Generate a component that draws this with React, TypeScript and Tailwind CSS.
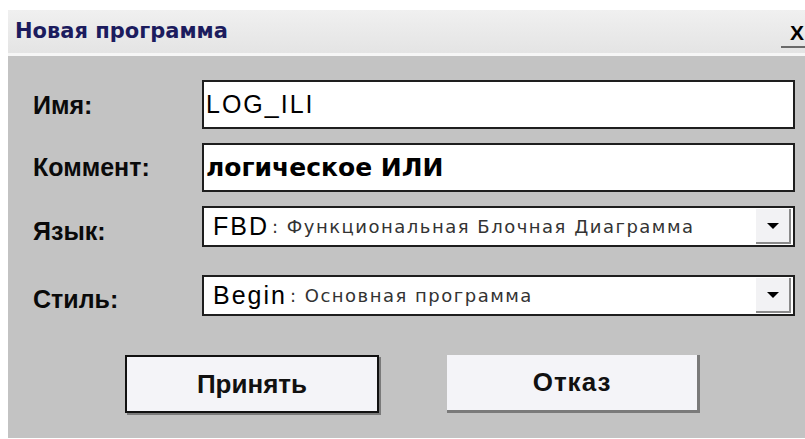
import React from "react";

const ui = { fontFamily: '"DejaVu Sans", "Noto Sans", sans-serif' };
const arial = { fontFamily: '"Liberation Sans", Arial, sans-serif' };

function TextField({ children, bold }: { children: React.ReactNode; bold?: boolean }) {
  return (
    <div className="flex h-[49px] flex-1 items-center border-2 border-[#1e1e1e] bg-white pl-[2px]">
      {bold ? (
        <span className="text-[25px] font-bold leading-none text-black">{children}</span>
      ) : (
        <span className="text-[25px] leading-none tracking-[2px] text-black" style={arial}>
          {children}
        </span>
      )}
    </div>
  );
}

function SelectField({ code, label }: { code: string; label: string }) {
  return (
    <div className="flex h-[41px] flex-1 items-stretch border-2 border-[#1e1e1e] bg-white">
      <div className="flex flex-1 items-center pl-[9px]">
        <span className="text-[25px] leading-none tracking-[2px] text-black" style={arial}>
          {code}
        </span>
        <span className="ml-[3px] text-[18px] leading-none tracking-[1.5px] text-[#333]">
          : {label}
        </span>
      </div>
      <div className="my-[1px] mr-[2px] flex w-[35px] items-center justify-center border-r-2 border-b-2 border-[#8a8a8a] bg-[#f2f2f4]">
        <svg width="12" height="6" viewBox="0 0 12 6">
          <path d="M0 0 H12 L6 6 Z" fill="#000" />
        </svg>
      </div>
    </div>
  );
}

function Label({ children, shift = 0 }: { children: React.ReactNode; shift?: number }) {
  return (
    <div className="w-[169px] shrink-0 text-[25px] font-bold leading-none text-[#0a0a0a]" style={{ ...arial, marginTop: shift }}>
      {children}
    </div>
  );
}

export default function App() {
  return (
    <div className="h-[439px] w-[805px] overflow-hidden bg-white pl-[8px] pt-[10px]" style={ui}>
      <div className="flex h-[428px] flex-col">
        {/* caption */}
        <div className="flex h-[43px] items-center justify-between bg-gradient-to-b from-[#f0f0f0] to-[#e4e4e4] pl-[7px]">
          <span className="text-[21px] font-bold text-[#1c1c5e]">Новая программа</span>
          <div className="flex h-full flex-col items-end justify-center pt-[6px]">
            <span className="mr-[1px] text-[21px] font-bold leading-none text-black" style={arial}>
              X
            </span>
            <div className="mt-[3px] h-[2px] w-[24px] bg-[#6a6a6a]" />
          </div>
        </div>
        <div className="h-[3px] bg-[#f6f6f6]" />

        {/* body */}
        <div className="flex flex-1 flex-col bg-[#c3c3c3] pl-[25px] pr-[10px] pt-[24px]">
          <div className="flex items-center">
            <Label shift={2}>Имя:</Label>
            <TextField>LOG_ILI</TextField>
          </div>
          <div className="mt-[14px] flex items-center">
            <Label>Коммент:</Label>
            <TextField bold>логическое ИЛИ</TextField>
          </div>
          <div className="mt-[14px] flex items-center">
            <Label shift={10}>Язык:</Label>
            <SelectField code="FBD" label="Функциональная Блочная Диаграмма" />
          </div>
          <div className="mt-[28px] flex items-center">
            <Label shift={7}>Стиль:</Label>
            <SelectField code="Begin" label="Основная программа" />
          </div>

          <div className="mt-[39px] flex gap-[68px] pl-[92px]">
            <button
              className="flex h-[58px] w-[254px] items-center justify-center border-2 border-[#111] bg-[#f4f4f8] text-[26px] font-bold text-[#111] shadow-[2px_2px_0_#7a7a7a]"
              style={arial}
            >
              Принять
            </button>
            <button
              className="flex h-[58px] w-[253px] items-center justify-center border-r-[3px] border-b-[3px] border-[#7a7a7a] bg-[#f4f4f8] text-[26px] font-bold tracking-[1px] text-[#111]"
              style={arial}
            >
              Отказ
            </button>
          </div>
        </div>
      </div>
    </div>
  );
}
